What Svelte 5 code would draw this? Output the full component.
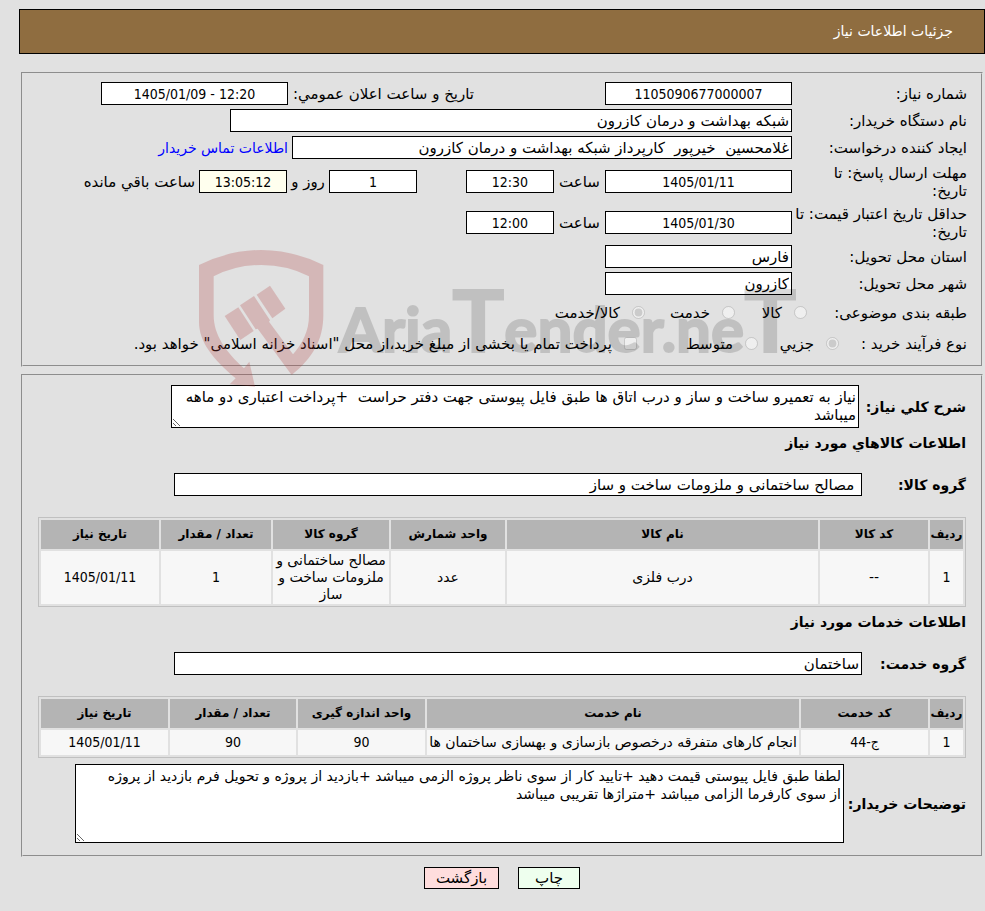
<script lang="ts">
  const goods = {
    columns: [
      { title: "ردیف", width: "33px" },
      { title: "کد کالا", width: "108px" },
      { title: "نام کالا", width: "auto" },
      { title: "واحد شمارش", width: "114px" },
      { title: "گروه کالا", width: "116px" },
      { title: "تعداد / مقدار", width: "110px" },
      { title: "تاریخ نیاز", width: "118px" },
    ],
    rows: [["1", "--", "درب فلزی", "عدد", "مصالح ساختمانی و ملزومات ساخت و ساز", "1", "1405/01/11"]],
  };

  const services = {
    columns: [
      { title: "ردیف", width: "33px" },
      { title: "کد خدمت", width: "127px" },
      { title: "نام خدمت", width: "auto" },
      { title: "واحد اندازه گیری", width: "127px" },
      { title: "تعداد / مقدار", width: "126px" },
      { title: "تاریخ نیاز", width: "127px" },
    ],
    rows: [["1", "ج-44", "انجام کارهای متفرقه درخصوص بازسازی و بهسازی ساختمان ها", "90", "90", "1405/01/11"]],
  };

  const description = "نیاز به تعمیرو ساخت و ساز و درب اتاق ها طبق فایل پیوستی جهت دفتر حراست  +پرداخت اعتباری دو ماهه میباشد";
  const notes = "لطفا طبق فایل پیوستی قیمت دهید +تایید کار از سوی ناظر پروژه الزمی میباشد +بازدید از پروژه و تحویل فرم بازدید از پروژه از سوی کارفرما الزامی میباشد +متراژها تقریبی میباشد";
</script>

{#snippet grid(data)}
  <table>
    <colgroup>
      {#each data.columns as col}
        <col style="width: {col.width}" />
      {/each}
    </colgroup>
    <thead>
      <tr>
        {#each data.columns as col}
          <th>{col.title}</th>
        {/each}
      </tr>
    </thead>
    <tbody>
      {#each data.rows as row}
        <tr>
          {#each row as cell}
            <td class:digits={/\d/.test(cell)}>{cell}</td>
          {/each}
        </tr>
      {/each}
    </tbody>
  </table>
{/snippet}

<main class="page" dir="rtl">
  <h1>جزئیات اطلاعات نیاز</h1>

  <fieldset class="info">
    <div class="row">
      <label class="name" for="need-no">شماره نیاز:</label>
      <input id="need-no" class="medium center" type="text" readonly value="1105090677000007" />
      <label class="announce" for="announce">تاریخ و ساعت اعلان عمومي:</label>
      <input id="announce" class="medium center" type="text" dir="ltr" readonly value="1405/01/09 - 12:20" />
    </div>
    <div class="row">
      <label class="name" for="buyer">نام دستگاه خریدار:</label>
      <input id="buyer" class="wide" type="text" readonly value="شبکه بهداشت و درمان کازرون" />
    </div>
    <div class="row">
      <label class="name" for="creator">ایجاد کننده درخواست:</label>
      <input id="creator" class="creator" type="text" readonly value="غلامحسین  خیرپور  کارپرداز شبکه بهداشت و درمان کازرون" />
      <a href="#contact">اطلاعات تماس خریدار</a>
    </div>
    <div class="row tall">
      <label class="name" for="deadline">مهلت ارسال پاسخ: تا<br />تاریخ:</label>
      <input id="deadline" class="medium center" type="text" readonly value="1405/01/11" />
      <label class="hour" for="deadline-time">ساعت</label>
      <input id="deadline-time" class="small center" type="text" readonly value="12:30" />
      <input id="days" class="small center days" type="text" readonly value="1" />
      <label class="and" for="days">روز و</label>
      <input id="remaining" class="small center remaining" type="text" readonly value="13:05:12" />
      <label class="left" for="remaining">ساعت باقي مانده</label>
    </div>
    <div class="row tall">
      <label class="name" for="validity">حداقل تاریخ اعتبار قیمت: تا<br />تاریخ:</label>
      <input id="validity" class="medium center" type="text" readonly value="1405/01/30" />
      <label class="hour" for="validity-time">ساعت</label>
      <input id="validity-time" class="small center" type="text" readonly value="12:00" />
    </div>
    <div class="row">
      <label class="name" for="province">استان محل تحویل:</label>
      <input id="province" class="medium" type="text" readonly value="فارس" />
    </div>
    <div class="row">
      <label class="name" for="city">شهر محل تحویل:</label>
      <input id="city" class="medium" type="text" readonly value="کازرون" />
    </div>
    <div class="row choices">
      <span class="name category">طبقه بندی موضوعی:</span>
      <label class="choice goods"><input type="radio" name="category" disabled />کالا</label>
      <label class="choice service"><input type="radio" name="category" disabled />خدمت</label>
      <label class="choice"><input type="radio" name="category" disabled checked />کالا/خدمت</label>
    </div>
    <div class="row choices">
      <span class="name process">نوع فرآیند خرید :</span>
      <label class="choice partial"><input type="radio" name="process" disabled checked />جزیي</label>
      <label class="choice average"><input type="radio" name="process" disabled />متوسط</label>
      <label class="choice"><input type="checkbox" disabled />پرداخت تمام یا بخشی از مبلغ خرید،از محل "اسناد خزانه اسلامی" خواهد بود.</label>
    </div>
  </fieldset>

  <fieldset class="details">
    <div class="field">
      <label for="description">شرح کلي نیاز:</label>
      <textarea id="description" class="description" readonly value={description}></textarea>
    </div>
    <h2>اطلاعات کالاهاي مورد نیاز</h2>
    <div class="field group">
      <label for="goods-group">گروه کالا:</label>
      <input id="goods-group" type="text" readonly value=" مصالح ساختمانی و ملزومات ساخت و ساز" />
    </div>
    {@render grid(goods)}

    <h2>اطلاعات خدمات مورد نیاز</h2>
    <div class="field group">
      <label for="service-group">گروه خدمت:</label>
      <input id="service-group" type="text" readonly value="ساختمان" />
    </div>
    {@render grid(services)}
    <div class="field notes-field">
      <label for="notes">توضیحات خریدار:</label>
      <textarea id="notes" class="notes" readonly value={notes}></textarea>
    </div>
  </fieldset>

  <div class="actions">
    <button class="print" type="button">چاپ</button>
    <button class="back" type="button">بازگشت</button>
  </div>

  <div class="watermark" dir="ltr" aria-hidden="true">
    <svg viewBox="54 39 1830 420" width="610" height="140">
      <g fill="#b13d3d" opacity="0.25">
        <path
          d="M60 90 Q152 45 247 45 Q342 45 433 90 V240 C433 315 400 370 338 420 L236 281 L230 283 L183 211 L225 183 L273 256 L270 260 L342 358 C370 325 390 290 390 240 V124 Q325 90 247 90 Q170 90 104 124 V240 C104 300 140 350 195 400 L211 380 L228 455 L152 448 L170 430 C100 370 60 320 60 260 Z"
        />
        <path d="M137 243 L178 217 L224 288 L184 315 Z" />
        <path d="M233 179 L273 152 L319 221 L280 250 Z" />
      </g>
      <text class="brand" x="480" y="350">Aria<tspan class="cap">T</tspan>ender.ne<tspan class="cap">T</tspan></text>
    </svg>
  </div>
</main>

<style>
  :global(body) {
    margin: 0;
    background: #e1e1e1;
  }

  .page {
    position: relative;
    padding: 9px 0 22px 19px;
    color: #000;
    font-family: "DejaVu Sans", Tahoma, sans-serif;
    font-size: 15px;
    line-height: 18px;
  }

  h1 {
    box-sizing: border-box;
    height: 45px;
    margin: 0 0 18px;
    padding: 0 31px;
    border: 1px solid #000;
    background: #8f6d40;
    color: #fff;
    font-size: 14px;
    font-weight: normal;
    line-height: 43px;
  }

  fieldset {
    min-width: 0;
    margin: 0 2px 7px;
    border: 2px groove #e1e1e1;
  }

  .info {
    display: flex;
    flex-direction: column;
    gap: 4px;
    padding: 8px 14px;
  }

  .row {
    display: flex;
    align-items: center;
  }

  .tall {
    min-height: 37px;
  }

  .name {
    flex: 0 0 175px;
    white-space: nowrap;
  }

  input[type="text"],
  textarea {
    box-sizing: border-box;
    margin: 0;
    border: 1px solid #000;
    border-radius: 0;
    background: #fff;
    color: #000;
    font: inherit;
    outline: 0;
  }

  input[type="text"] {
    height: 23px;
    padding: 1px 2px;
  }

  .medium {
    width: 187px;
  }

  .wide {
    width: 562px;
  }

  .creator {
    width: 500px;
  }

  input.small {
    width: 88px;
  }

  input.center {
    font-family: "DejaVu Sans Condensed", Tahoma, sans-serif;
    font-size: 14px;
    text-align: center;
  }

  .announce {
    width: 186px;
    margin-right: 131px;
    white-space: nowrap;
  }

  .hour {
    width: 51px;
    text-align: center;
  }

  input.days {
    margin-right: 49px;
  }

  .and {
    width: 42px;
    text-align: center;
    white-space: nowrap;
  }

  input.remaining {
    background: #ffffee;
  }

  .left {
    margin-right: 4px;
    white-space: nowrap;
  }

  a {
    margin-right: 4px;
    color: #0000ff;
    font-size: 14px;
    text-decoration: none;
  }

  .choices {
    min-height: 27px;
  }

  .name.category {
    flex-basis: 160px;
  }

  .name.process {
    flex-basis: 128px;
  }

  .choice {
    display: flex;
    align-items: center;
    white-space: nowrap;
  }

  .choice input {
    width: 13px;
    height: 13px;
    margin: 0 0 0 12px;
  }

  .goods {
    width: 72px;
  }

  .service {
    width: 90px;
  }

  .partial {
    width: 81px;
  }

  .average {
    width: 121px;
  }

  .details {
    padding: 9px 15px 12px;
  }

  .field {
    display: flex;
    align-items: center;
    gap: 4px;
  }

  .field label,
  h2 {
    font-size: 14px;
    font-weight: bold;
  }

  .field label {
    flex: 1;
    min-width: 0;
    white-space: nowrap;
  }

  h2 {
    margin: 6px 0 21px;
    line-height: 18px;
  }

  .group {
    margin-bottom: 21px;
  }

  .group input {
    width: 688px;
    margin-left: 136px;
  }

  textarea {
    display: block;
    padding: 2px;
    resize: both;
  }

  .description {
    width: 688px;
    height: 43px;
    margin-left: 133px;
  }

  .notes-field {
    margin-top: 6px;
  }

  textarea.notes {
    width: 769px;
    height: 79px;
    margin-left: 37px;
    padding-left: 20px;
    font-size: 14px;
  }

  table {
    width: 100%;
    table-layout: fixed;
    border: 1px solid #c0c0c0;
    border-collapse: separate;
    border-spacing: 2px;
    font-size: 14px;
    line-height: 17px;
    text-align: center;
  }

  th {
    height: 29px;
    padding: 0;
    background: #b4b4b4;
    font-size: 12px;
    white-space: nowrap;
  }

  td {
    height: 25px;
    padding: 1px 0;
    box-sizing: border-box;
    background: #f7f7f7;
  }

  .digits {
    font-family: "DejaVu Sans Condensed", Tahoma, sans-serif;
  }

  .actions {
    display: flex;
    justify-content: center;
    gap: 19px;
    padding-top: 3px;
  }

  button {
    box-sizing: border-box;
    height: 22px;
    padding: 0;
    border: 1px solid #000;
    border-radius: 0;
    color: #000;
    font: inherit;
  }

  .print {
    width: 62px;
    background: #eeffee;
  }

  .back {
    width: 75px;
    background: #ffdddd;
  }

  .watermark {
    position: absolute;
    top: 248px;
    right: 0;
    left: 19px;
    display: flex;
    justify-content: center;
    pointer-events: none;
  }

  .brand {
    fill: #000;
    stroke: #000;
    stroke-width: 6px;
    opacity: 0.14;
    font-family: Lato, sans-serif;
    font-size: 186px;
    font-weight: bold;
  }

  .cap {
    font-size: 260px;
  }
</style>
